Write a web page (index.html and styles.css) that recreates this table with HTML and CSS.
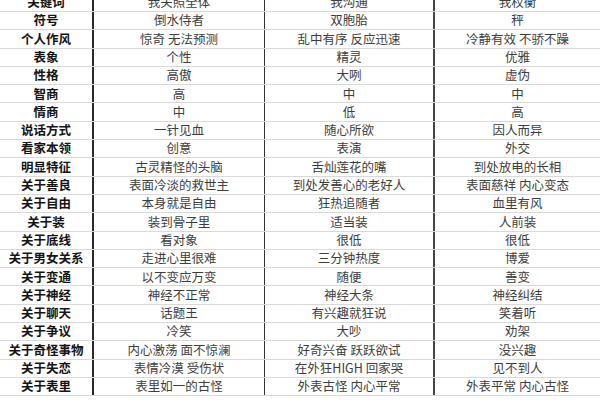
FILE: index.html
```html
<!DOCTYPE html>
<html lang="zh">
<head>
<meta charset="utf-8">
<link rel="stylesheet" href="styles.css">
</head>
<body>
<div class="table">
  <div class="row"><div class="c k">关键词</div><div class="c v1">我关照全体</div><div class="c v2">我沟通</div><div class="c v3">我权衡</div></div>
  <div class="row"><div class="c k">符号</div><div class="c v1">倒水侍者</div><div class="c v2">双胞胎</div><div class="c v3">秤</div></div>
  <div class="row"><div class="c k">个人作风</div><div class="c v1">惊奇 无法预测</div><div class="c v2">乱中有序 反应迅速</div><div class="c v3">冷静有效 不骄不躁</div></div>
  <div class="row"><div class="c k">表象</div><div class="c v1">个性</div><div class="c v2">精灵</div><div class="c v3">优雅</div></div>
  <div class="row"><div class="c k">性格</div><div class="c v1">高傲</div><div class="c v2">大咧</div><div class="c v3">虚伪</div></div>
  <div class="row"><div class="c k">智商</div><div class="c v1">高</div><div class="c v2">中</div><div class="c v3">中</div></div>
  <div class="row"><div class="c k">情商</div><div class="c v1">中</div><div class="c v2">低</div><div class="c v3">高</div></div>
  <div class="row"><div class="c k">说话方式</div><div class="c v1">一针见血</div><div class="c v2">随心所欲</div><div class="c v3">因人而异</div></div>
  <div class="row"><div class="c k">看家本领</div><div class="c v1">创意</div><div class="c v2">表演</div><div class="c v3">外交</div></div>
  <div class="row"><div class="c k">明显特征</div><div class="c v1">古灵精怪的头脑</div><div class="c v2">舌灿莲花的嘴</div><div class="c v3">到处放电的长相</div></div>
  <div class="row"><div class="c k">关于善良</div><div class="c v1">表面冷淡的救世主</div><div class="c v2">到处发善心的老好人</div><div class="c v3">表面慈祥 内心变态</div></div>
  <div class="row"><div class="c k">关于自由</div><div class="c v1">本身就是自由</div><div class="c v2">狂热追随者</div><div class="c v3">血里有风</div></div>
  <div class="row"><div class="c k">关于装</div><div class="c v1">装到骨子里</div><div class="c v2">适当装</div><div class="c v3">人前装</div></div>
  <div class="row"><div class="c k">关于底线</div><div class="c v1">看对象</div><div class="c v2">很低</div><div class="c v3">很低</div></div>
  <div class="row"><div class="c k">关于男女关系</div><div class="c v1">走进心里很难</div><div class="c v2">三分钟热度</div><div class="c v3">博爱</div></div>
  <div class="row"><div class="c k">关于变通</div><div class="c v1">以不变应万变</div><div class="c v2">随便</div><div class="c v3">善变</div></div>
  <div class="row"><div class="c k">关于神经</div><div class="c v1">神经不正常</div><div class="c v2">神经大条</div><div class="c v3">神经纠结</div></div>
  <div class="row"><div class="c k">关于聊天</div><div class="c v1">话题王</div><div class="c v2">有兴趣就狂说</div><div class="c v3">笑着听</div></div>
  <div class="row"><div class="c k">关于争议</div><div class="c v1">冷笑</div><div class="c v2">大吵</div><div class="c v3">劝架</div></div>
  <div class="row"><div class="c k">关于奇怪事物</div><div class="c v1">内心激荡 面不惊澜</div><div class="c v2">好奇兴奋 跃跃欲试</div><div class="c v3">没兴趣</div></div>
  <div class="row"><div class="c k">关于失恋</div><div class="c v1">表情冷漠 受伤状</div><div class="c v2">在外狂HIGH 回家哭</div><div class="c v3">见不到人</div></div>
  <div class="row"><div class="c k">关于表里</div><div class="c v1">表里如一的古怪</div><div class="c v2">外表古怪 内心平常</div><div class="c v3">外表平常 内心古怪</div></div>
</div>
</body>
</html>
```

FILE: styles.css
```css
html, body {
  margin: 0;
  padding: 0;
  background: #ffffff;
  overflow: hidden;
}
body {
  width: 600px;
  height: 400px;
  font-family: "Noto Sans CJK SC", "Noto Sans", sans-serif;
}
.table {
  margin-top: -6.3px;
  display: flex;
  flex-direction: column;
}
.row {
  display: grid;
  grid-template-columns: 92px 172px 169px 1fr;
  height: 18.3px;
  box-sizing: border-box;
  border-bottom: 1px solid #d9d9d9;
}
.c {
  display: flex;
  align-items: center;
  justify-content: center;
  white-space: nowrap;
  font-size: 12.5px;
  color: #3d3d3d;
  line-height: 1;
}
.k {
  font-weight: bold;
  color: #141414;
  font-size: 12.5px;
}
.v1 {
  border-left: 2px solid #2a2a2a;
}
.v2 {
  border-left: 1px solid #333333;
}
.v3 {
  border-left: 2px solid #444444;
}
```
